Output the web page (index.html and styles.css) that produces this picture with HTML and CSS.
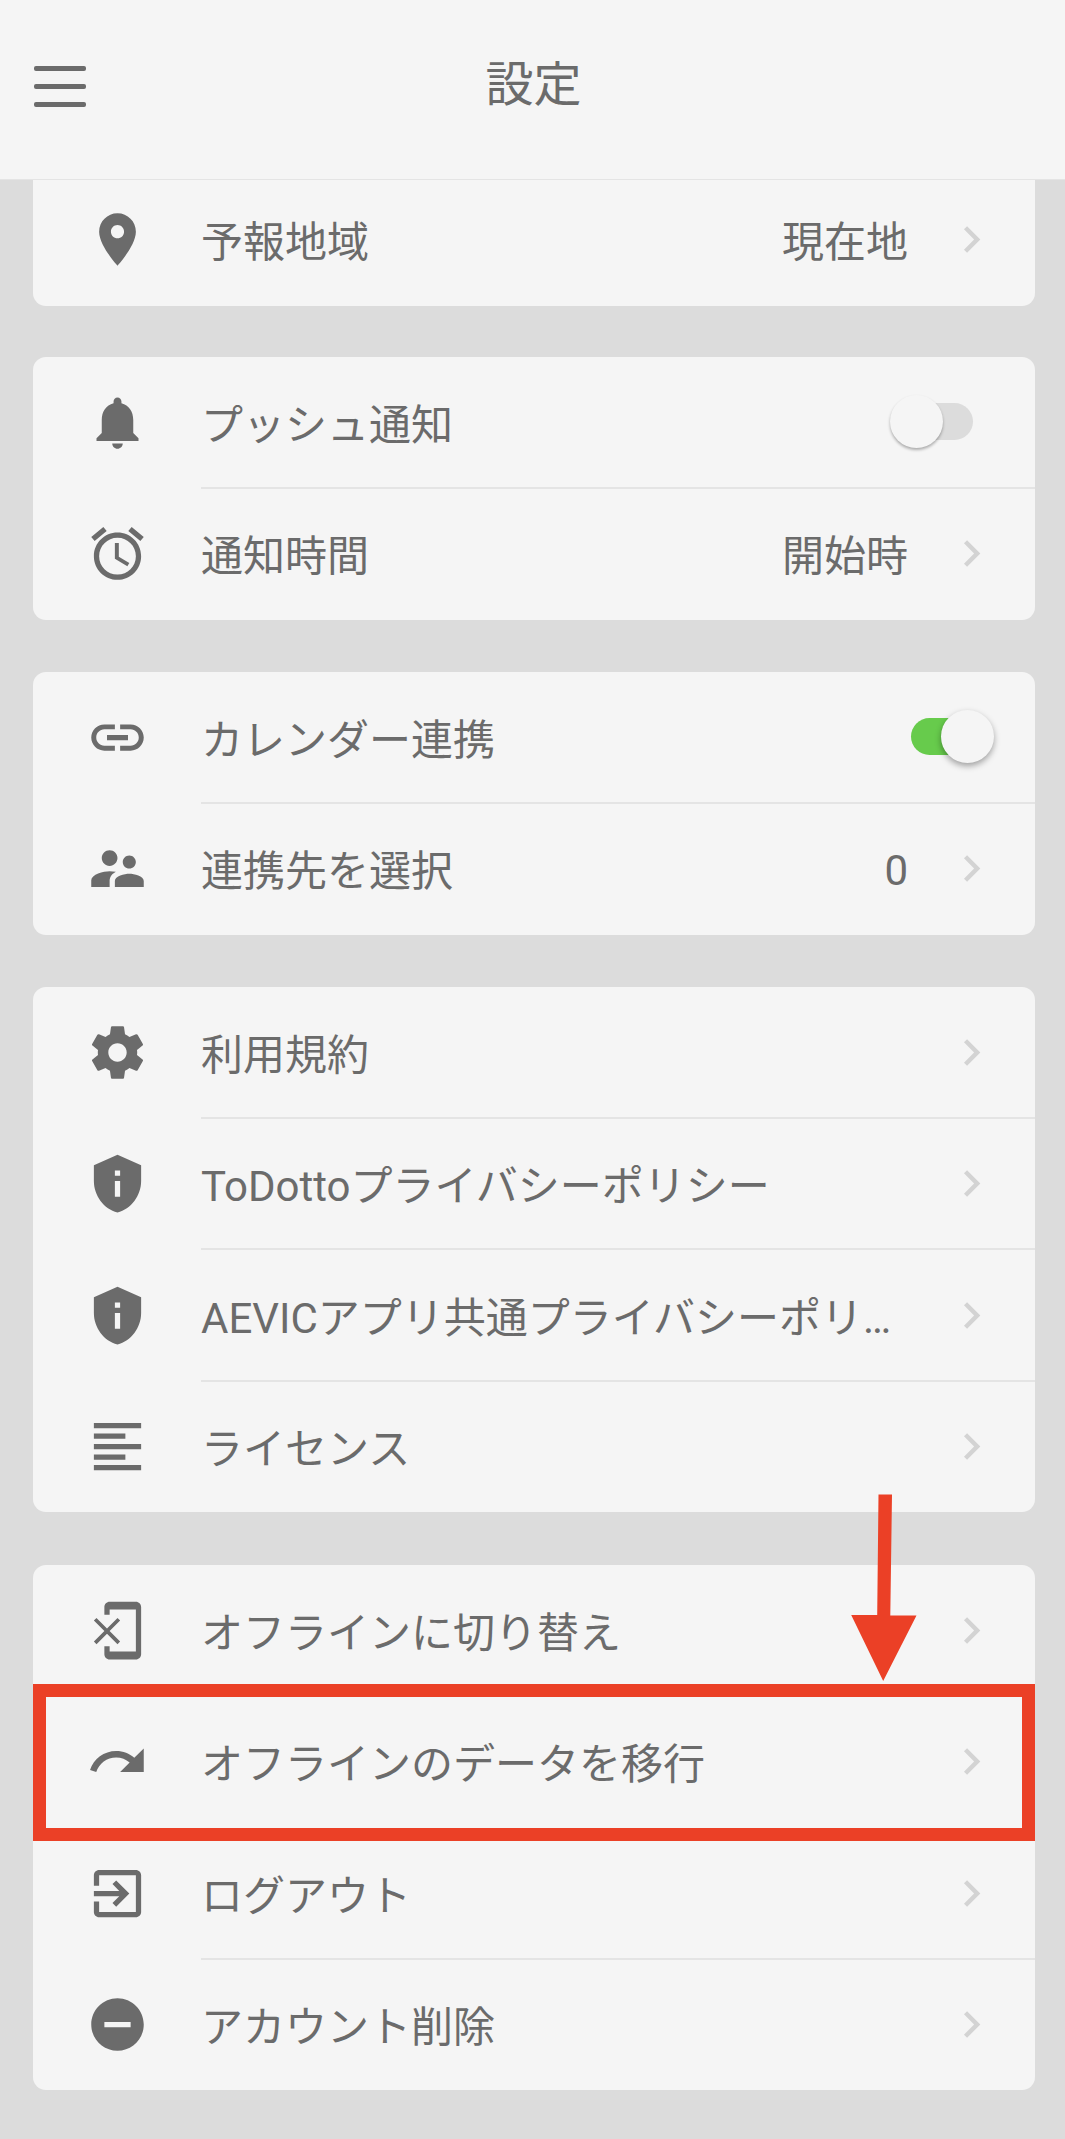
FILE: index.html
```html
<!DOCTYPE html>
<html lang="ja">
<head>
    <meta charset="UTF-8">
    <title>設定</title>
    <link rel="stylesheet" href="styles.css">
</head>
<body>
<div class="header">
    <a class="menu-btn" href="javascript:void(0);"><span></span><span></span><span></span></a>
    <h1>設定</h1>
</div>

<svg class="defs" width="0" height="0">
    <symbol id="chevron" viewBox="0 0 24 24"><path d="M10 6L8.59 7.41 13.17 12l-4.58 4.59L10 18l6-6z"/></symbol>
    <symbol id="shield" viewBox="0 0 24 24"><path d="M12 1L3 5v6c0 5.55 3.84 10.74 9 12 5.16-1.26 9-6.45 9-12V5l-9-4zm-1 6h2v2h-2V7zm0 4h2v6h-2v-6z"/></symbol>
</svg>

<div class="content">
    <div class="card card-first">
        <div class="row">
            <svg class="icon" viewBox="0 0 24 24"><path d="M12 2C8.13 2 5 5.13 5 9c0 5.25 7 13 7 13s7-7.75 7-13c0-3.87-3.13-7-7-7zm0 9.5c-1.38 0-2.5-1.12-2.5-2.5s1.12-2.5 2.5-2.5 2.5 1.12 2.5 2.5-1.12 2.5-2.5 2.5z"/></svg>
            <div class="row-body">
                <span class="label">予報地域</span>
                <span class="value">現在地</span>
                <svg class="chevron"><use href="#chevron"/></svg>
            </div>
        </div>
    </div>

    <div class="card">
        <div class="row">
            <svg class="icon" viewBox="0 0 24 24"><path d="M12 22c1.1 0 2-.9 2-2h-4c0 1.1.89 2 2 2zm6-6v-5c0-3.07-1.64-5.64-4.5-6.32V4c0-.83-.67-1.5-1.5-1.5s-1.5.67-1.5 1.5v.68C7.63 5.36 6 7.92 6 11v5l-2 2v1h16v-1l-2-2z"/></svg>
            <div class="row-body">
                <span class="label">プッシュ通知</span>
                <span class="switch"><i></i></span>
            </div>
        </div>
        <div class="row">
            <svg class="icon" viewBox="0 0 24 24"><path d="M22 5.72l-4.6-3.86-1.29 1.53 4.6 3.86L22 5.72zM7.88 3.39L6.6 1.86 2 5.71l1.29 1.53 4.59-3.85zM12.5 8H11v6l4.75 2.85.75-1.23-4-2.37V8zM12 4c-4.97 0-9 4.03-9 9s4.02 9 9 9c4.97 0 9-4.03 9-9s-4.03-9-9-9zm0 16c-3.87 0-7-3.13-7-7s3.13-7 7-7 7 3.13 7 7-3.13 7-7 7z"/></svg>
            <div class="row-body">
                <span class="label">通知時間</span>
                <span class="value">開始時</span>
                <svg class="chevron"><use href="#chevron"/></svg>
            </div>
        </div>
    </div>

    <div class="card">
        <div class="row">
            <svg class="icon" viewBox="0 0 24 24"><path d="M3.9 12c0-1.71 1.39-3.1 3.1-3.1h4V7H7c-2.76 0-5 2.24-5 5s2.24 5 5 5h4v-1.9H7c-1.71 0-3.1-1.39-3.1-3.1zM8 13h8v-2H8v2zm9-6h-4v1.9h4c1.71 0 3.1 1.39 3.1 3.1s-1.39 3.1-3.1 3.1h-4V17h4c2.76 0 5-2.24 5-5s-2.24-5-5-5z"/></svg>
            <div class="row-body">
                <span class="label">カレンダー連携</span>
                <span class="switch switch-on"><i></i></span>
            </div>
        </div>
        <div class="row">
            <svg class="icon" viewBox="0 0 24 24"><path d="M16.5 12c1.38 0 2.49-1.12 2.49-2.5S17.88 7 16.5 7C15.12 7 14 8.12 14 9.5s1.12 2.5 2.5 2.5zM9 11c1.66 0 2.99-1.34 2.99-3S10.66 5 9 5C7.34 5 6 6.34 6 8s1.34 3 3 3zm7.5 3c-1.83 0-5.5.92-5.5 2.75V19h11v-2.25c0-1.83-3.67-2.75-5.5-2.75zM9 13c-2.33 0-7 1.17-7 3.5V19h7v-2.25c0-.85.33-2.34 2.37-3.47C10.5 13.1 9.66 13 9 13z"/></svg>
            <div class="row-body">
                <span class="label">連携先を選択</span>
                <span class="value value-num">0</span>
                <svg class="chevron"><use href="#chevron"/></svg>
            </div>
        </div>
    </div>

    <div class="card">
        <div class="row">
            <svg class="icon" viewBox="0 0 24 24"><path d="M19.43 12.98c.04-.32.07-.64.07-.98s-.03-.66-.07-.98l2.11-1.65c.19-.15.24-.42.12-.64l-2-3.46c-.12-.22-.39-.3-.61-.22l-2.49 1c-.52-.4-1.08-.73-1.69-.98l-.38-2.65C14.46 2.18 14.25 2 14 2h-4c-.25 0-.46.18-.49.42l-.38 2.65c-.61.25-1.17.59-1.69.98l-2.49-1c-.23-.09-.49 0-.61.22l-2 3.46c-.13.22-.07.49.12.64l2.11 1.65c-.04.32-.07.65-.07.98s.03.66.07.98l-2.11 1.65c-.19.15-.24.42-.12.64l2 3.46c.12.22.39.3.61.22l2.49-1c.52.4 1.08.73 1.69.98l.38 2.65c.03.24.24.42.49.42h4c.25 0 .46-.18.49-.42l.38-2.65c.61-.25 1.17-.59 1.69-.98l2.49 1c.23.09.49 0 .61-.22l2-3.46c.12-.22.07-.49-.12-.64l-2.11-1.65zM12 15.5c-1.93 0-3.5-1.57-3.5-3.5s1.57-3.5 3.5-3.5 3.5 1.57 3.5 3.5-1.57 3.5-3.5 3.5z"/></svg>
            <div class="row-body">
                <span class="label">利用規約</span>
                <svg class="chevron"><use href="#chevron"/></svg>
            </div>
        </div>
        <div class="row">
            <svg class="icon"><use href="#shield"/></svg>
            <div class="row-body">
                <span class="label">ToDottoプライバシーポリシー</span>
                <svg class="chevron"><use href="#chevron"/></svg>
            </div>
        </div>
        <div class="row">
            <svg class="icon"><use href="#shield"/></svg>
            <div class="row-body">
                <span class="label">AEVICアプリ共通プライバシーポリ…</span>
                <svg class="chevron"><use href="#chevron"/></svg>
            </div>
        </div>
        <div class="row">
            <svg class="icon" viewBox="0 0 24 24"><path d="M15 15H3v2h12v-2zm0-8H3v2h12V7zM3 13h18v-2H3v2zm0 8h18v-2H3v2zM3 3v2h18V3H3z"/></svg>
            <div class="row-body">
                <span class="label">ライセンス</span>
                <svg class="chevron"><use href="#chevron"/></svg>
            </div>
        </div>
    </div>

    <div class="card">
        <div class="row">
            <svg class="icon" viewBox="0 0 24 24"><path d="M13 8.2l-1-1-4 4-4-4-1 1 4 4-4 4 1 1 4-4 4 4 1-1-4-4 4-4zM19 1H9c-1.1 0-2 .9-2 2v3h2V4h10v16H9v-2H7v3c0 1.1.9 2 2 2h10c1.1 0 2-.9 2-2V3c0-1.1-.9-2-2-2z"/></svg>
            <div class="row-body">
                <span class="label">オフラインに切り替え</span>
                <svg class="chevron"><use href="#chevron"/></svg>
            </div>
        </div>
        <div class="row row-marked">
            <svg class="icon" viewBox="0 0 24 24"><path d="M18.4 10.6C16.55 8.99 14.15 8 11.5 8c-4.65 0-8.58 3.03-9.96 7.22L3.9 16c1.05-3.19 4.05-5.5 7.6-5.5 1.95 0 3.73.72 5.12 1.88L13 16h9V7l-3.6 3.6z"/></svg>
            <div class="row-body">
                <span class="label">オフラインのデータを移行</span>
                <svg class="chevron"><use href="#chevron"/></svg>
            </div>
            <svg class="arrow" viewBox="0 0 66 188"><path d="M27.5 .5H41L39.3 121.5H65.5L32.2 187 .2 121H26.2z"/></svg>
        </div>
        <div class="row">
            <svg class="icon" viewBox="0 0 24 24"><path d="M10.09 15.59L11.5 17l5-5-5-5-1.41 1.41L12.67 11H3v2h9.67l-2.58 2.59zM19 3H5c-1.11 0-2 .9-2 2v4h2V5h14v14H5v-4H3v4c0 1.1.89 2 2 2h14c1.1 0 2-.9 2-2V5c0-1.1-.9-2-2-2z"/></svg>
            <div class="row-body">
                <span class="label">ログアウト</span>
                <svg class="chevron"><use href="#chevron"/></svg>
            </div>
        </div>
        <div class="row">
            <svg class="icon" viewBox="0 0 24 24"><path d="M12 2C6.48 2 2 6.48 2 12s4.48 10 10 10 10-4.48 10-10S17.52 2 12 2zm5 11H7v-2h10v2z"/></svg>
            <div class="row-body">
                <span class="label">アカウント削除</span>
                <svg class="chevron"><use href="#chevron"/></svg>
            </div>
        </div>
    </div>
</div>
</body>
</html>
```
FILE: styles.css
```css
* {
    box-sizing: border-box;
}
body {
    margin: 0;
    background: #dcdcdc;
    color: #6b6b6b;
    font-family: Roboto, "Noto Sans CJK JP", sans-serif;
    font-size: 42px;
}
.header {
    display: grid;
    grid-template-columns: 102px 1fr 100px;
    align-items: center;
    height: 180px;
    padding-bottom: 6px;
    background: #f5f5f5;
    border-bottom: 1px solid #e4e4e4;
}
.header h1 {
    margin: 0;
    padding-bottom: 4px;
    text-align: center;
    font-size: 48px;
    font-weight: 400;
    line-height: 60px;
}
.menu-btn {
    display: flex;
    flex-direction: column;
    gap: 13px;
    width: 52px;
    margin-left: 33.5px;
}
.menu-btn span {
    height: 5px;
    border-radius: 2px;
    background: #6b6b6b;
}
.defs {
    display: none;
}
.content {
    padding: 0 30px 49px 33px;
}
.card {
    margin-bottom: 52px;
    border-radius: 13px;
    background: #f5f5f5;
}
.card:last-child {
    margin-top: 53px;
    margin-bottom: 0;
}
.card-first {
    margin-bottom: 51px;
    border-radius: 0 0 13px 13px;
}
.row {
    position: relative;
    display: flex;
    height: 131px;
}
.row:nth-child(odd) {
    height: 132px;
}
.row:nth-child(4) {
    height: 130px;
}
.card-first .row:nth-child(odd) {
    height: 126px;
    padding-bottom: 6px;
}
.icon {
    flex: none;
    align-self: center;
    width: 63px;
    height: 63px;
    margin: 0 52px 2px 53px;
    fill: #6b6b6b;
}
.row-body {
    flex: 1;
    display: flex;
    align-items: center;
    min-width: 0;
    padding-right: 37px;
    border-bottom: 2px solid #e4e4e4;
}
.row:last-child .row-body,
.row-marked .row-body {
    border-color: transparent;
}
.label {
    flex: 1;
    white-space: nowrap;
    line-height: 60px;
    padding-top: 7px;
}
.value {
    padding-top: 7px;
    line-height: 60px;
}
.value-num {
    padding-top: 4px;
}
.chevron {
    flex: none;
    width: 53px;
    height: 53px;
    margin-left: 37px;
    fill: #d3d3d3;
}
.switch {
    position: relative;
    width: 62px;
    height: 37px;
    margin-right: 25px;
    margin-bottom: 2px;
    border-radius: 19px;
    background: #dcdcdc;
}
.switch i {
    position: absolute;
    top: -8px;
    left: -21px;
    width: 53px;
    height: 53px;
    border-radius: 50%;
    background: #f5f5f5;
    box-shadow: 0 2px 3px rgba(0, 0, 0, 0.3);
}
.switch-on {
    background: #67cb4c;
}
.switch-on i {
    left: 30px;
    box-shadow: 0 3px 6px rgba(0, 0, 0, 0.35);
}
/* 赤枠と矢印 */
.row-marked:after {
    content: "";
    position: absolute;
    top: -13.5px;
    right: 0.5px;
    bottom: -13px;
    left: -0.5px;
    border: 13px solid #eb4026;
}
.arrow {
    position: absolute;
    top: -203px;
    left: 818px;
    width: 66px;
    height: 188px;
    fill: #eb4026;
}
```
